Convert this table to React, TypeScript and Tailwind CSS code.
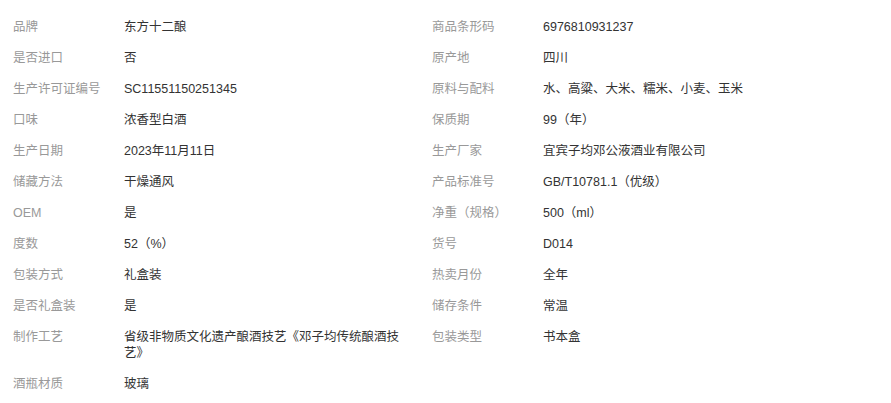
const ITEMS: [string, string][] = [
  ["品牌", "东方十二酿"],
  ["商品条形码", "6976810931237"],
  ["是否进口", "否"],
  ["原产地", "四川"],
  ["生产许可证编号", "SC11551150251345"],
  ["原料与配料", "水、高粱、大米、糯米、小麦、玉米"],
  ["口味", "浓香型白酒"],
  ["保质期", "99（年）"],
  ["生产日期", "2023年11月11日"],
  ["生产厂家", "宜宾子均邓公液酒业有限公司"],
  ["储藏方法", "干燥通风"],
  ["产品标准号", "GB/T10781.1（优级）"],
  ["OEM", "是"],
  ["净重（规格）", "500（ml）"],
  ["度数", "52（%）"],
  ["货号", "D014"],
  ["包装方式", "礼盒装"],
  ["热卖月份", "全年"],
  ["是否礼盒装", "是"],
  ["储存条件", "常温"],
  ["制作工艺", "省级非物质文化遗产酿酒技艺《邓子均传统酿酒技艺》"],
  ["包装类型", "书本盒"],
  ["酒瓶材质", "玻璃"],
];

export default function App() {
  return (
    <div
      className="w-[891px] min-h-[403px] bg-white pt-[11px] text-[12.5px] leading-[16px]"
      style={{ fontFamily: '"Liberation Sans", Arial, "Noto Sans CJK SC", sans-serif' }}
    >
      <div className="grid grid-cols-2 w-[838px]">
        {ITEMS.map(([label, value]) => (
          <div key={label} className="flex py-[7.5px] pl-[13px] pr-[13px]">
            <div className="w-[111px] shrink-0 text-[#999999]">{label}</div>
            <div className="flex-1 text-[#333333] break-all">{value}</div>
          </div>
        ))}
      </div>
    </div>
  );
}
